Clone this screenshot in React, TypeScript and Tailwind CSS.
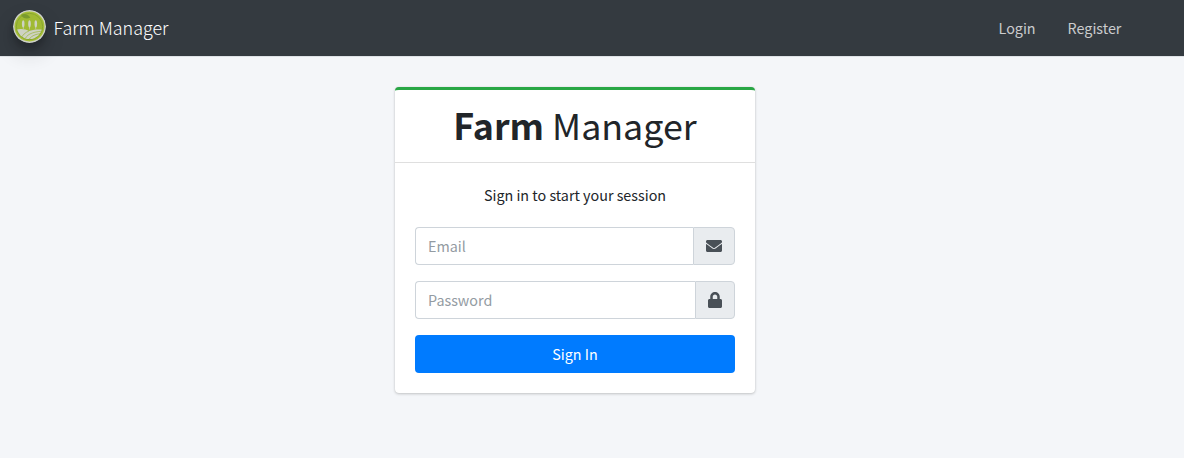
import { FaEnvelope, FaLock } from "react-icons/fa";

function Logo() {
  return (
    <svg
      viewBox="0 0 33 33"
      className="h-[33px] w-[33px] shrink-0 rounded-full opacity-80 shadow-[0_10px_20px_rgba(0,0,0,0.19),0_6px_6px_rgba(0,0,0,0.23)]"
    >
      <defs>
        <clipPath id="field">
          <circle cx="16.5" cy="16.5" r="12.6" />
        </clipPath>
      </defs>
      <circle cx="16.5" cy="16.5" r="16.5" fill="#f4f6ea" />
      <circle cx="16.5" cy="16.5" r="15" fill="#c3e035" />
      <circle cx="16.5" cy="16.5" r="13.2" fill="#bcda30" stroke="#9fc22c" strokeWidth="1" />
      <g clipPath="url(#field)">
        <path d="M3 19.5C8 18.3 13 19 16 21C20 19.2 26 19 31 20V33H3Z" fill="#f5f8e5" />
        <path
          d="M11.5 30C13.5 25 18 22 29 21.2M15 31C17.5 26.5 21 24 30 23.4M19 31C21.5 28 24 26.5 30 25.8M8 28.5C9.5 25 12 22.5 16 21"
          fill="none"
          stroke="#bdd84d"
          strokeWidth="0.8"
        />
      </g>
      <g fill="#f5f8e5">
        <ellipse cx="10.2" cy="13.8" rx="1.3" ry="3.6" />
        <ellipse cx="16.5" cy="13.8" rx="1.3" ry="3.6" />
        <ellipse cx="22.8" cy="13.8" rx="1.3" ry="3.6" />
        <path d="M9.9 16h.6v3h-.6zM16.2 16h.6v3.5h-.6zM22.5 16h.6v3h-.6z" />
      </g>
      <path d="M8 5C10.5 3.2 15 3.6 17.3 7.8C13.5 9.2 10 8.6 8 5Z" fill="#8cb32a" />
    </svg>
  );
}

function Navbar() {
  return (
    <nav className="flex h-[57px] items-center justify-between border-b border-[#dee2e6] bg-[#343a40] pr-[62px] pl-[13px]">
      <a href="#" className="flex items-center gap-[7.5px] pb-[3px]">
        <Logo />
        <span className="pt-px text-[17.9px] leading-[30px] font-light text-white">Farm Manager</span>
      </a>
      <div className="flex gap-8 pr-[0.6px] text-[14.33px] leading-6 text-white/75">
        <a href="#">Login</a>
        <a href="#">Register</a>
      </div>
    </nav>
  );
}

type FieldProps = { type: string; placeholder: string; icon: React.ReactNode };

function Field({ type, placeholder, icon }: FieldProps) {
  return (
    <div className="mb-4 flex h-[38px]">
      <input
        type={type}
        placeholder={placeholder}
        className="min-w-0 flex-1 rounded-l border border-r-0 border-[#ced4da] bg-white px-3 text-[14.33px] leading-6 text-[#495057] outline-none placeholder:text-[#939ba2]"
      />
      <div className="flex items-center rounded-r border border-[#ced4da] bg-[#e9ecef] px-3 text-[#495057]">
        {icon}
      </div>
    </div>
  );
}

export default function App() {
  return (
    <div className="min-h-screen bg-[#f4f6f9] font-['Noto_Sans_CJK_SC',sans-serif] text-[#212529]">
      <Navbar />
      <main className="flex justify-center pt-[30px] pr-[34px]">
        <section className="w-[360px] rounded border-t-[3px] border-[#28a745] bg-white shadow-[0_0_1px_rgba(0,0,0,0.125),0_1px_3px_rgba(0,0,0,0.2)]">
          <h1 className="border-b border-black/[0.125] pt-2.5 pb-3.5 text-center text-[35.8px] leading-[48px] font-normal">
            <b className="font-bold">Farm</b> Manager
          </h1>
          <form className="p-5" onSubmit={(e) => e.preventDefault()}>
            <p className="mb-5 text-center text-[14.33px] leading-6">Sign in to start your session</p>
            <Field type="email" placeholder="Email" icon={<FaEnvelope className="h-4 w-4" />} />
            <Field type="password" placeholder="Password" icon={<FaLock className="h-4 w-[14px]" />} />
            <button
              type="submit"
              className="block h-[38px] w-full rounded bg-[#007bff] text-center text-[14.33px] leading-6 text-white"
            >
              Sign In
            </button>
          </form>
        </section>
      </main>
    </div>
  );
}
